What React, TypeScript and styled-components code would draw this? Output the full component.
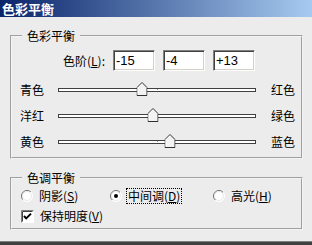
import React from 'react';
import styled, { createGlobalStyle } from 'styled-components';

const GlobalStyle = createGlobalStyle`
  html, body {
    margin: 0;
    padding: 0;
    background: #ececec;
  }
  body {
    font-family: "Noto Sans CJK SC", "Liberation Sans", sans-serif;
    font-size: 12px;
    color: #000;
  }
`;

const Window = styled.div`
  width: 312px;
  height: 245px;
  display: flex;
  flex-direction: column;
  background: #ececec;
  overflow: hidden;
`;

const TitleBar = styled.div`
  flex: none;
  height: 17px;
  padding-left: 2px;
  display: flex;
  align-items: center;
  background: linear-gradient(to right, #0a246a, #a6caf0);
  color: #fff;
  font-weight: bold;
  font-size: 13px;
  line-height: 17px;
`;

const Body = styled.div`
  flex: 1;
  padding: 12px 9px 0 10px;
  display: flex;
  flex-direction: column;
`;

const Group = styled.fieldset<{ $top: number; $bottom: number }>`
  margin: ${p => p.$top}px 0 0;
  padding: 0 0 ${p => p.$bottom}px;
  min-width: 0;
  border: 2px groove #f4f4f4;

  legend {
    margin-left: 10px;
    padding: 0 5px;
    line-height: 14px;
    font-size: 12px;
  }
`;

const LevelsRow = styled.div`
  display: flex;
  align-items: center;
  height: 21px;
  margin-top: 7px;
`;

const LevelsLabel = styled.span`
  width: 93px;
  text-align: right;
  margin-right: 8px;
  line-height: 14px;
`;

const LevelInput = styled.input`
  box-sizing: border-box;
  width: 42px;
  height: 21px;
  margin: 0 8px 0 0;
  padding: 0 0 0 2px;
  border-top: 1px solid #808080;
  border-left: 1px solid #808080;
  border-right: 1px solid #fff;
  border-bottom: 1px solid #fff;
  box-shadow: inset 1px 1px 0 #404040, inset -1px -1px 0 #d4d0c8;
  background: #fff;
  font-family: "Liberation Sans", sans-serif;
  font-size: 13px;
  color: #000;
  outline: none;
`;

const Sliders = styled.div`
  margin-top: 6px;
  display: flex;
  flex-direction: column;
`;

const SliderRow = styled.div`
  display: grid;
  grid-template-columns: 38px 198px 1fr;
  align-items: center;
  height: 26px;
  padding-left: 8px;
`;

const SideLabel = styled.span<{ $right?: boolean }>`
  line-height: 14px;
  padding-left: ${p => (p.$right ? 15 : 0)}px;
`;

const Track = styled.div`
  position: relative;
  box-sizing: border-box;
  height: 4px;
  border: 1px solid #404040;
  background: #fff;
`;

const CenterTick = styled.div`
  position: absolute;
  left: 98px;
  top: 0;
  width: 1px;
  height: 1px;
  background: #9a9a9a;
`;

const Thumb = styled.svg`
  position: absolute;
  top: -7px;
  transform: translateX(-50%);
  display: block;
`;

const ToneRow = styled.div<{ $gap: number }>`
  display: flex;
  align-items: center;
  height: 16px;
  margin-top: ${p => p.$gap}px;
  padding-left: 9px;
`;

const Option = styled.label<{ $width?: number }>`
  display: flex;
  align-items: center;
  gap: 4px;
  width: ${p => (p.$width ? `${p.$width}px` : 'auto')};
  line-height: 14px;
`;

const OptionText = styled.span<{ $focused?: boolean }>`
  padding: 0 1px;
  border: 1px dotted ${p => (p.$focused ? '#000' : 'transparent')};
  line-height: 14px;
`;

const BottomEdge = styled.div`
  flex: none;
  height: 3px;
  border-top: 1px solid #808080;
  background: #404040;
`;

type SliderProps = { left: string; right: string; value: number };

const Slider = ({ left, right, value }: SliderProps) => {
  const pct = ((value + 100) / 200) * 100;
  return (
    <SliderRow>
      <SideLabel>{left}</SideLabel>
      <Track>
        <CenterTick />
        <Thumb width="11" height="14" viewBox="0 0 11 14" style={{ left: `${pct}%` }}>
          <polygon points="0.5,5.5 5.5,0.5 10.5,5.5 10.5,13.5 0.5,13.5" fill="#f2f2f2" stroke="#303030" />
          <polyline points="1.5,12.5 1.5,5.9 5.5,1.9" fill="none" stroke="#fff" />
        </Thumb>
      </Track>
      <SideLabel $right>{right}</SideLabel>
    </SliderRow>
  );
};

const Radio = ({ checked }: { checked?: boolean }) => (
  <svg width="12" height="12" viewBox="0 0 12 12">
    <defs>
      <linearGradient id="radioEdge" x1="0" y1="0" x2="1" y2="1">
        <stop offset="50%" stopColor="#6e6e6e" />
        <stop offset="50%" stopColor="#ffffff" />
      </linearGradient>
    </defs>
    <circle cx="6" cy="6" r="5.5" fill="#fff" stroke="url(#radioEdge)" />
    <circle cx="6" cy="6" r="4.5" fill="none" stroke="#e8e8e8" />
    {checked && <circle cx="6" cy="6" r="2" fill="#000" />}
  </svg>
);

const CheckBox = () => (
  <svg width="13" height="13" viewBox="0 0 13 13">
    <rect x="0" y="0" width="13" height="13" fill="#fff" />
    <path d="M0.5 12.5 V0.5 H12.5" fill="none" stroke="#808080" />
    <path d="M1.5 11.5 V1.5 H11.5" fill="none" stroke="#404040" />
    <polyline points="3,6 5.2,8.4 10,3.6" fill="none" stroke="#000" strokeWidth="2" />
  </svg>
);

const App = () => {
  const levels = [-15, -4, 13];
  return (
    <>
      <GlobalStyle />
      <Window>
        <TitleBar>色彩平衡</TitleBar>
        <Body>
          <Group $top={0} $bottom={2}>
            <legend>色彩平衡</legend>
            <LevelsRow>
              <LevelsLabel>
                色阶(<u>L</u>):
              </LevelsLabel>
              {levels.map((v, i) => (
                <LevelInput key={i} readOnly value={v > 0 ? `+${v}` : `${v}`} />
              ))}
            </LevelsRow>
            <Sliders>
              <Slider left="青色" right="红色" value={levels[0]} />
              <Slider left="洋红" right="绿色" value={levels[1]} />
              <Slider left="黄色" right="蓝色" value={levels[2]} />
            </Sliders>
          </Group>
          <Group $top={12} $bottom={4}>
            <legend>色调平衡</legend>
            <ToneRow $gap={3}>
              <Option $width={89}>
                <Radio />
                <OptionText>
                  阴影(<u>S</u>)
                </OptionText>
              </Option>
              <Option $width={103}>
                <Radio checked />
                <OptionText $focused>
                  中间调(<u>D</u>)
                </OptionText>
              </Option>
              <Option>
                <Radio />
                <OptionText>
                  高光(<u>H</u>)
                </OptionText>
              </Option>
            </ToneRow>
            <ToneRow $gap={4}>
              <Option>
                <CheckBox />
                <OptionText>
                  保持明度(<u>V</u>)
                </OptionText>
              </Option>
            </ToneRow>
          </Group>
        </Body>
        <BottomEdge />
      </Window>
    </>
  );
};

export default App;
